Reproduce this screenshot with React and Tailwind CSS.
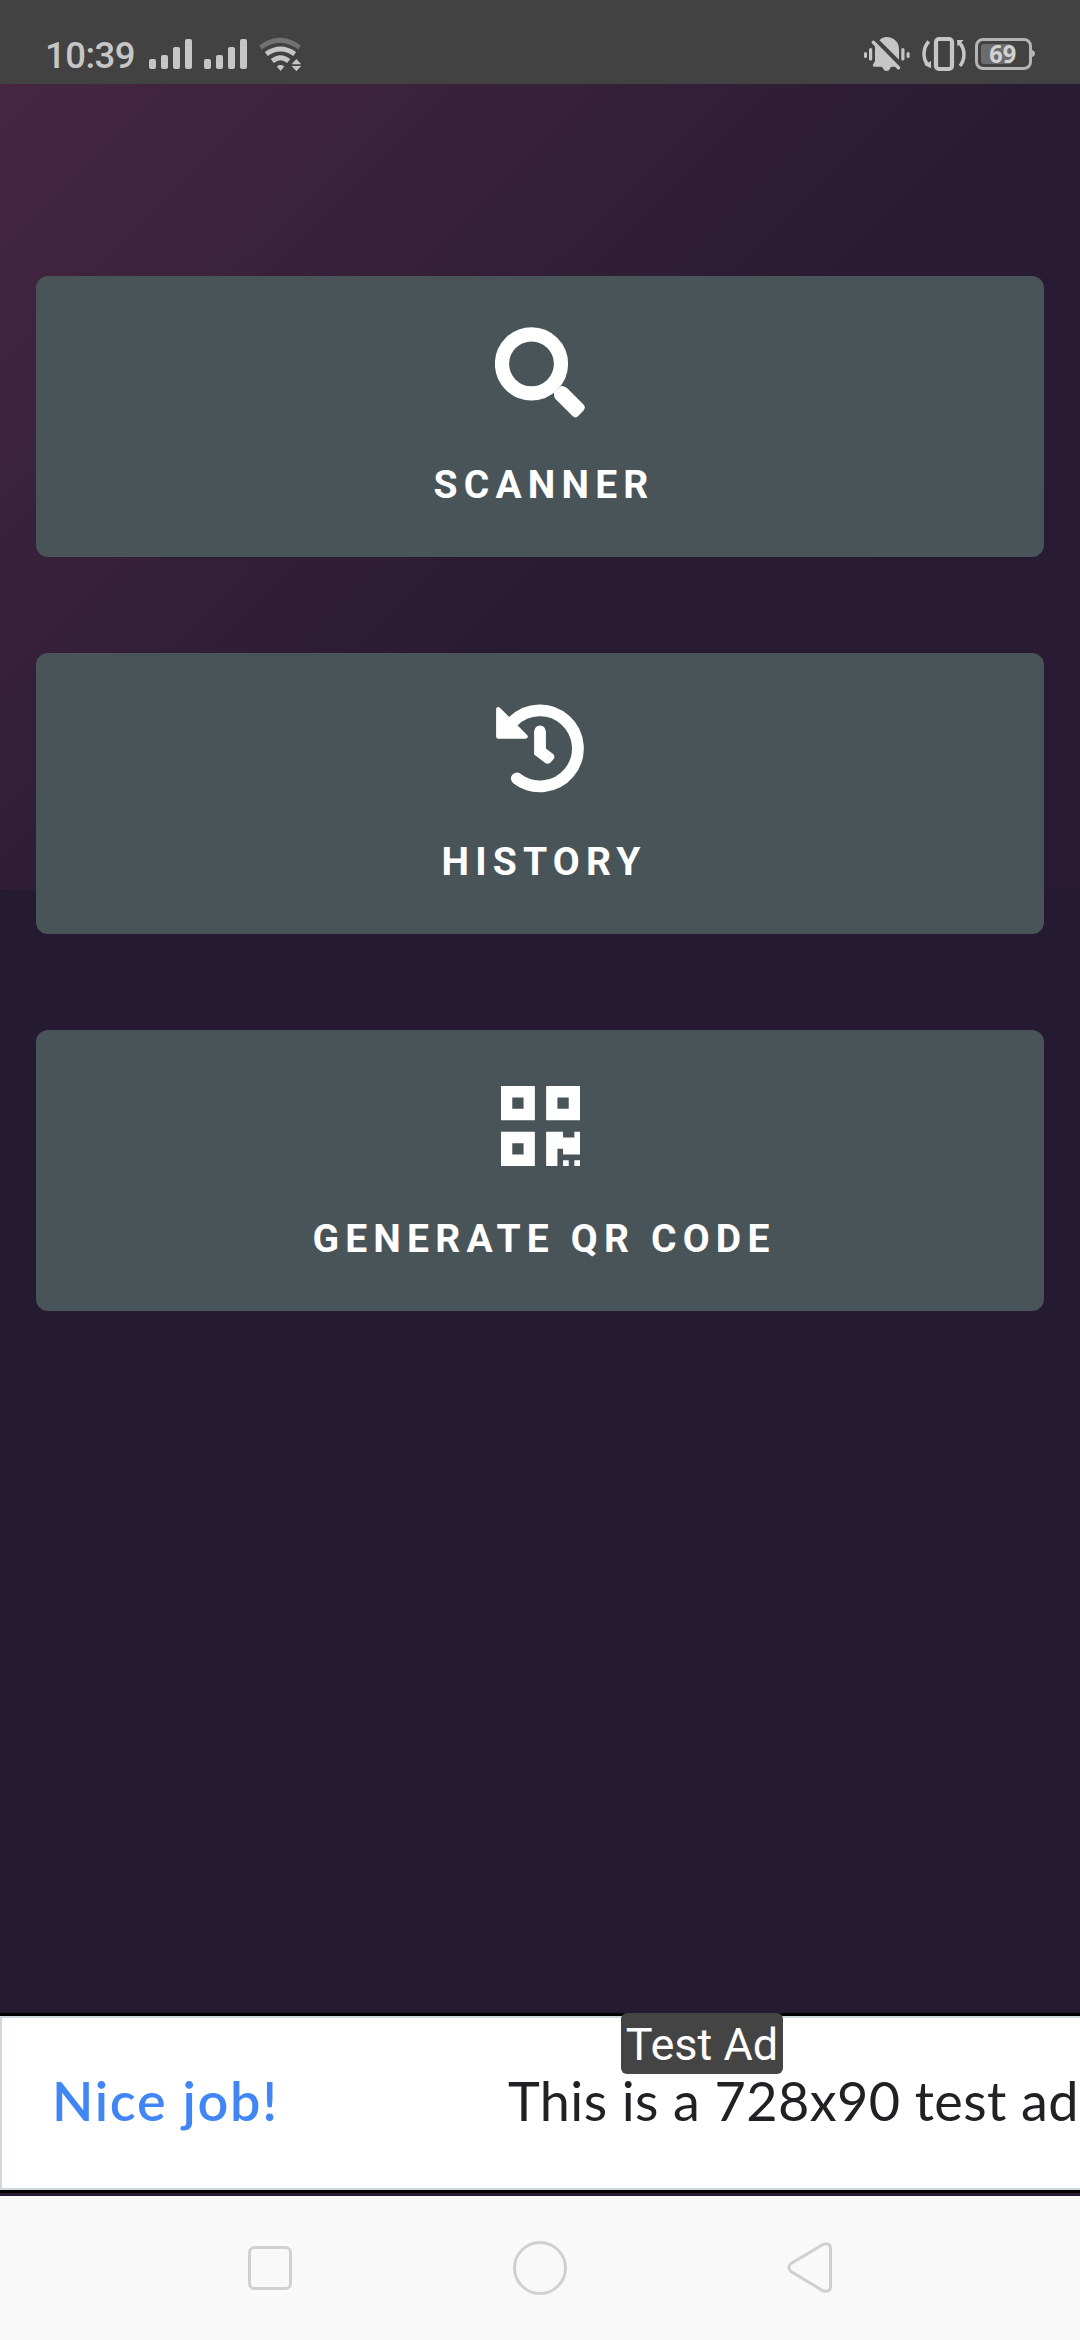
import React from "react";

const Bars = () => (
  <svg width="44" height="31" viewBox="0 0 44 31" fill="#c6c6c6">
    <rect x="0" y="20" width="7" height="10" rx="2" />
    <rect x="12" y="16" width="7" height="14" rx="2" />
    <rect x="24" y="8" width="7" height="22" rx="2" />
    <rect x="36" y="0" width="7" height="30" rx="2" />
  </svg>
);

const Wifi = () => (
  <svg width="44" height="34" viewBox="258 37 44 34" fill="none" stroke="#c6c6c6">
    <path d="M260.500 47.500Q280 33 299.500 47.500" stroke="#727272" strokeWidth="5" />
    <path d="M266.300 54Q280.500 44 294.700 54" strokeWidth="5" />
    <path d="M272.300 61Q280.500 54.600 288.700 61" strokeWidth="5" />
    <path d="M276.800 66.500Q280.500 63.600 284.300 66.500L280.600 71Z" fill="#c6c6c6" stroke="none" />
    <path d="M296.400 59L301.200 64.200H291.600ZM291.600 66H301.200L296.400 71.200Z" fill="#c6c6c6" stroke="none" />
  </svg>
);

const Muted = () => (
  <svg width="48" height="36" viewBox="863 36 48 36" fill="#c6c6c6">
    <rect x="864" y="52" width="3" height="6" rx="1.500" />
    <rect x="869" y="48" width="3.200" height="12.500" rx="1.600" />
    <rect x="901.300" y="48" width="3.200" height="12.500" rx="1.600" />
    <rect x="906.600" y="52" width="3" height="6" rx="1.500" />
    <path d="M879.500 40.300Q882.500 37 886.800 37C893.500 37 899 42 899 49V59.800Z" />
    <path d="M875 45.700L896 66.700H892L890.500 67.500Q889.500 71 886.700 71Q884 71 882.500 67.500L881 66.700H874Q871.500 66 874 63L875 61Z" />
    <path d="M873.300 42.300L898.500 67.800" stroke="#c6c6c6" strokeWidth="3.500" strokeLinecap="round" />
  </svg>
);

const Vibrate = () => (
  <svg width="46" height="36" viewBox="921 36 46 36" fill="none" stroke="#c6c6c6">
    <rect x="936" y="39" width="16" height="30" rx="3" strokeWidth="4.200" />
    <path d="M928.800 41.500C922.800 48 922.500 58 927.500 64.500M960 66C965.500 59 965 49 960 43.500" strokeWidth="3.500" />
    <path d="M924.300 65L931 61V68.200ZM957 40H963.600L957.500 46.500Z" fill="#c6c6c6" stroke="none" />
  </svg>
);

const Battery = () => (
  <svg width="61" height="34" viewBox="974 37 61 34">
    <rect x="976.500" y="39.500" width="54" height="29" rx="6.500" fill="none" stroke="#b4b4b4" strokeWidth="3" />
    <path d="M1032 50Q1035 51 1035 53.500T1032 57Z" fill="#b4b4b4" />
    <rect x="981" y="44" width="31" height="20" rx="3" fill="#6c6c6c" />
    <text x="989.300" y="63.200" textLength="27" lengthAdjust="spacingAndGlyphs" fontSize="24.500" fontWeight="700" fill="#d2d2d2" fontFamily="'Noto Sans', sans-serif">69</text>
  </svg>
);

const SearchIcon = () => (
  <svg width="90" height="91" viewBox="95 67 90 91" fill="#fff">
    <circle cx="131.500" cy="103.800" r="29.500" fill="none" stroke="#fff" strokeWidth="14.200" />
    <path d="M154 132.500L161 126Q164.500 125.500 167.500 128.500L183.500 144.500Q186.200 147.500 183.500 150.500L178.500 155.800Q175.500 159 172.500 156L155.500 139Q153.500 136.500 154 132.500Z" />
  </svg>
);

const HistoryIcon = () => (
  <svg width="90" height="90" viewBox="95 65 90 90" fill="none" stroke="#fff">
    <path d="M113 82.500A38 38 0 1 1 116.800 139.500" strokeWidth="11.800" strokeLinecap="round" />
    <path d="M98.300 70.200L125.500 97.500H98.300Z" fill="#fff" strokeWidth="4.400" strokeLinejoin="round" />
    <path d="M140 92.500V112.500L148.500 119" strokeWidth="11.800" />
    <path d="M134.200 94Q134.200 86.500 140 86.500T145.800 94ZM144.800 123.600Q148.500 126.500 151.500 122.500L153.600 120Q156 117 152 114Z" fill="#fff" stroke="none" />
  </svg>
);

const QrIcon = () => (
  <svg width="79" height="80" viewBox="0 0 14 14" preserveAspectRatio="none" fill="#fff" fillRule="evenodd">
    <path d="M0 0H6V6H0ZM2 2V4H4V2ZM8 0H14V6H8ZM10 2V4H12V2ZM0 8H6V14H0ZM2 10V12H4V10Z" />
    <path d="M8 8H11V9H13V8H14V12H11V11H10V14H8ZM11 13H12V14H11ZM13 13H14V14H13Z" />
  </svg>
);

const Card = ({ icon, label }) => (
  <button className="flex h-[281px] w-full flex-col items-center rounded-xl bg-[#495459] pt-[46px]">
    <span className="flex h-[100px] items-center justify-center">{icon}</span>
    <span className="mt-[40px] pl-[8px] text-[39px] font-bold leading-[46px] tracking-[6.200px] text-white">{label}</span>
  </button>
);

export default function App() {
  return (
    <div className="flex h-[2340px] w-[1080px] flex-col overflow-hidden bg-[#241a32] font-['Roboto',sans-serif]">
      <header className="flex h-[84px] shrink-0 items-start bg-[#424242]">
        <div className="flex w-full items-start pl-[45px] pr-[45px]">
          <span className="mt-[34px] w-[104px] text-[36.500px] font-medium leading-[44px] tracking-[-0.500px] text-[#c6c6c6]">10:39</span>
          <span className="mt-[39px]"><Bars /></span>
          <span className="ml-[11px] mt-[39px]"><Bars /></span>
          <span className="ml-[10px] mt-[37px]"><Wifi /></span>
          <span className="ml-auto mt-[36px]"><Muted /></span>
          <span className="ml-[10px] mt-[36px]"><Vibrate /></span>
          <span className="ml-[7px] mt-[37px]"><Battery /></span>
        </div>
      </header>

      <main className="flex h-[1929px] shrink-0 flex-col gap-[96px] bg-[linear-gradient(135deg,#462643_0%,#291b33_55%,#291a33_100%)] bg-[length:1080px_806px] bg-no-repeat px-9 pt-[192px]">
        <Card icon={<SearchIcon />} label="SCANNER" />
        <Card icon={<HistoryIcon />} label="HISTORY" />
        <Card icon={<QrIcon />} label="GENERATE QR CODE" />
      </main>

      <section className="relative h-[180px] shrink-0 border-y-[3px] border-black bg-white">
        <div className="flex h-[174px] items-center overflow-hidden whitespace-nowrap border-y-2 border-l-2 border-[#cfd8dc] pb-[4px] font-['Lato',sans-serif] leading-[60px]">
          <span className="w-[453px] shrink-0 pl-[50px] text-[54px] font-semibold tracking-[1.700px] text-[#4285f4]">Nice job!</span>
          <span className="pl-[53px] text-[54px] tracking-[0.400px] text-[#202124]">This is a 728x90 test ad</span>
        </div>
        <div className="absolute left-[621px] top-[-3px] flex h-[61px] w-[162px] items-center justify-center whitespace-nowrap rounded-md bg-[#444] pt-[3px] text-[45px] leading-[58px] text-white">
          Test Ad
        </div>
      </section>
      <div className="h-[3px] shrink-0" />

      <nav className="flex h-[144px] shrink-0 items-center justify-center bg-[#f9f9f9]">
        <svg width="590" height="56" viewBox="245 2240 590 56" fill="none" stroke="#d0d0d0" strokeWidth="3">
          <rect x="249.500" y="2247.500" width="41" height="41" rx="5" />
          <circle cx="540" cy="2268" r="25.500" />
          <path d="M823 2244.500L791 2263.500Q786.500 2267.500 791 2271.500L823 2290.800Q830.500 2293 830.500 2286V2249Q830.500 2242 823 2244.500Z" />
        </svg>
      </nav>
    </div>
  );
}
